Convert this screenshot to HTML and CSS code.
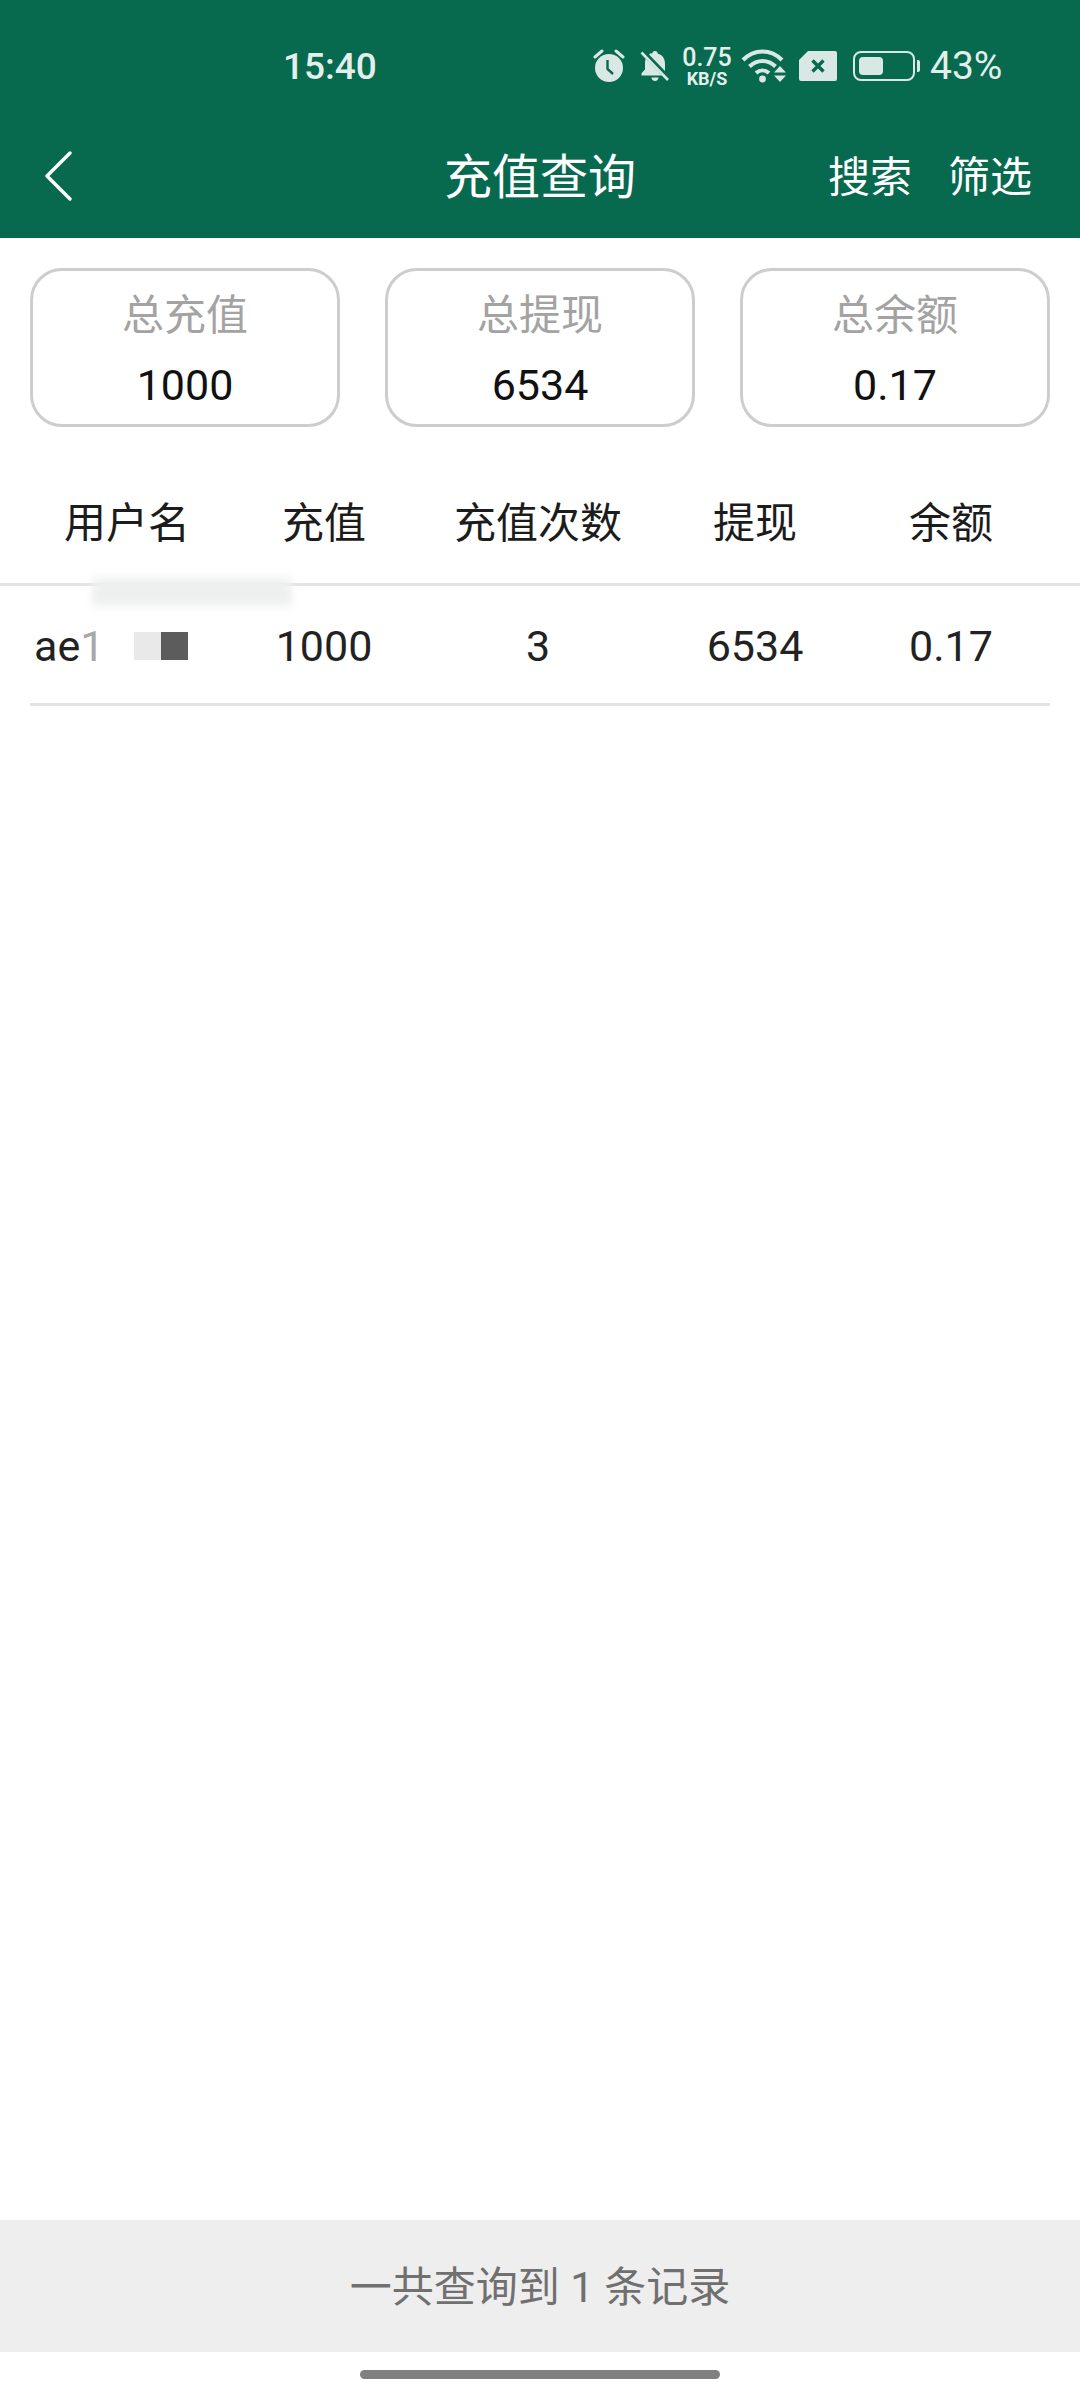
FILE: index.html
```html
<!DOCTYPE html>
<html lang="zh-CN">
<head>
    <meta charset="UTF-8">
    <meta name="viewport" content="width=device-width, initial-scale=1.0">
    <title>充值查询</title>
    <link rel="stylesheet" href="styles.css">
</head>
<body>
    <header class="topBar">
        <div class="statusBar">
            <span class="clock">15:40</span>
            <div class="statusIcons">
                <!-- alarm -->
                <svg class="icon alarmIcon" width="32" height="34" viewBox="0 0 32 34">
                    <circle cx="16" cy="19" r="14" fill="#d9e8e4"/>
                    <path d="M14.5 11v9l5.5 5" fill="none" stroke="#07694e" stroke-width="2.4"/>
                    <path d="M2 8l7-6M30 8l-7-6" fill="none" stroke="#d9e8e4" stroke-width="3" stroke-linecap="round"/>
                </svg>
                <!-- muted bell -->
                <svg class="icon bellIcon" width="30" height="34" viewBox="0 0 30 34">
                    <path d="M15 2c1.700 0 2.800 1.200 2.800 2.800 4.800 1.200 7.200 5 7.200 10v7.200L9 5.600C10.500 4.200 11 3.900 12.200 4.800 12.200 3.200 13.300 2 15 2zM5.600 9.500L22 26.500H1.500v-2.200L5 20.500v-6c0-1.800.2-3.500.6-5zM11.500 28.500h7c0 2-1.500 3.500-3.500 3.500s-3.500-1.500-3.500-3.500z" fill="#d9e8e4"/>
                    <path d="M1.500 3.500L28 31" fill="none" stroke="#d9e8e4" stroke-width="2.600"/>
                </svg>
                <div class="netSpeed">
                    <span class="netValue">0.75</span>
                    <span class="netUnit">KB/S</span>
                </div>
                <!-- wifi with up/down arrows -->
                <svg class="icon wifiIcon" width="46" height="34" viewBox="0 0 46 34">
                    <path d="M2 11C13 -0.500 30 -0.500 41 11M8.500 17.500C16 10 27 10 34.500 17.500M15 24C19 20.500 24 20.500 28 24" fill="none" stroke="#d9e8e4" stroke-width="4"/>
                    <circle cx="21.500" cy="30" r="3.400" fill="#d9e8e4"/>
                    <path d="M39 17l6 6.500H33zM39 33l6-6.500H33z" fill="#d9e8e4"/>
                </svg>
                <!-- sim card, no service -->
                <svg class="icon simIcon" width="38" height="30" viewBox="0 0 38 30">
                    <path d="M9 0h27a2 2 0 0 1 2 2v26a2 2 0 0 1-2 2H2a2 2 0 0 1-2-2V9z" fill="#d9e8e4"/>
                    <path d="M13.500 9.500l11 11M24.500 9.500l-11 11" fill="none" stroke="#07694e" stroke-width="3.400"/>
                </svg>
                <div class="battery">
                    <div class="batteryBody"><div class="batteryFill"></div></div>
                    <div class="batteryTip"></div>
                </div>
                <span class="batteryText">43%</span>
            </div>
        </div>
        <nav class="navBar">
            <svg class="backIcon" width="28" height="50" viewBox="0 0 28 50">
                <path d="M26 2L3 25l23 23" fill="none" stroke="#fff" stroke-width="3.400" stroke-linecap="round" stroke-linejoin="round"/>
            </svg>
            <h1 class="navTitle">充值查询</h1>
            <div class="navActions">
                <span>搜索</span>
                <span>筛选</span>
            </div>
        </nav>
    </header>

    <main class="content">
        <section class="summary">
            <div class="summaryCard">
                <div class="summaryLabel">总充值</div>
                <div class="summaryValue">1000</div>
            </div>
            <div class="summaryCard">
                <div class="summaryLabel">总提现</div>
                <div class="summaryValue">6534</div>
            </div>
            <div class="summaryCard">
                <div class="summaryLabel">总余额</div>
                <div class="summaryValue">0.17</div>
            </div>
        </section>

        <div class="tableRow tableHead">
            <div>用户名</div>
            <div>充值</div>
            <div>充值次数</div>
            <div>提现</div>
            <div>余额</div>
        </div>
        <div class="rowWrap">
            <div class="smudge"></div>
            <div class="tableRow tableData">
                <div class="userCell">
                    <span>ae</span><span class="fadedChar">1</span>
                    <i class="maskLight"></i><i class="maskDark"></i>
                </div>
                <div>1000</div>
                <div>3</div>
                <div>6534</div>
                <div>0.17</div>
            </div>
        </div>
    </main>

    <footer class="recordBar">一共查询到 1 条记录</footer>
    <div class="homeArea"><div class="homeBar"></div></div>
</body>
</html>
```

FILE: styles.css
```css
* {
    box-sizing: border-box;
}
html, body {
    height: 2400px;
}
body {
    margin: 0;
    display: flex;
    flex-direction: column;
    background-color: #fff;
    color: #222;
    font-family: Roboto, "Noto Sans CJK SC", sans-serif;
}
.topBar {
    height: 238px;
    background-color: #07694e;
    color: #fff;
}
.statusBar {
    height: 114px;
    padding: 18px 80px 0 283px;
    display: flex;
    align-items: center;
    justify-content: space-between;
    color: #e4efec;
}
.clock {
    font-size: 37px;
    font-weight: 500;
}
.statusIcons {
    display: flex;
    align-items: center;
}
.icon {
    display: block;
}
.alarmIcon {
    margin-right: 15px;
}
.bellIcon {
    margin-right: 13px;
}
.netSpeed {
    width: 48px;
    margin-right: 10px;
    display: flex;
    flex-direction: column;
    align-items: center;
    line-height: 1;
    font-weight: 500;
}
.netValue {
    font-size: 25px;
    height: 25px;
}
.netUnit {
    font-size: 18px;
    height: 18px;
    font-weight: 700;
}
.wifiIcon {
    margin-right: 12px;
}
.simIcon {
    margin-right: 16px;
}
.battery {
    display: flex;
    align-items: center;
    margin-right: 10px;
}
.batteryBody {
    width: 62px;
    height: 30px;
    padding: 4px;
    border: 2px solid #d9e8e4;
    border-radius: 8px;
}
.batteryFill {
    width: 24px;
    height: 100%;
    background-color: #d9e8e4;
    border-radius: 4px;
}
.batteryTip {
    width: 3px;
    height: 12px;
    margin-left: 2px;
    background-color: #d9e8e4;
    border-radius: 0 2px 2px 0;
}
.batteryText {
    font-size: 39px;
    width: 70px;
}
.navBar {
    height: 124px;
    padding: 0 48px 0 44px;
    display: flex;
    align-items: center;
    justify-content: space-between;
    position: relative;
}
.navTitle {
    position: absolute;
    left: 0;
    right: 0;
    margin: 0;
    padding-bottom: 6px;
    text-align: center;
    font-size: 48px;
    font-weight: 400;
}
.navActions {
    display: flex;
    gap: 36px;
    padding-bottom: 6px;
    font-size: 42px;
}
.content {
    flex: 1;
}
.summary {
    padding: 30px 30px 0;
    display: flex;
    justify-content: space-between;
}
.summaryCard {
    width: 310px;
    height: 159px;
    padding-top: 18px;
    border: 3px solid #cdcdcd;
    border-radius: 32px;
    text-align: center;
}
.summaryLabel {
    font-size: 42px;
    line-height: 54px;
    color: #a3a3a3;
}
.summaryValue {
    margin-top: 15px;
    font-size: 43px;
    line-height: 54px;
    color: #111;
}
.tableRow {
    display: grid;
    grid-template-columns: 194px 200px 228px 206px 186px;
    padding: 0 30px;
    align-items: center;
    text-align: center;
}
.tableHead {
    height: 159px;
    padding-top: 28px;
    font-size: 42px;
    border-bottom: 3px solid #e3e3e3;
    color: #1c1c1c;
}
.rowWrap {
    position: relative;
    height: 120px;
}
.tableData {
    height: 120px;
    font-size: 43px;
    position: relative;
}
.tableData::after {
    content: "";
    position: absolute;
    left: 30px;
    right: 30px;
    bottom: 0;
    height: 3px;
    background-color: #e3e3e3;
}
.userCell {
    display: flex;
    align-items: center;
    padding-left: 4px;
    text-align: left;
}
.fadedChar {
    color: #a8a8a8;
}
.maskLight, .maskDark {
    display: block;
    width: 27px;
    height: 28px;
}
.maskLight {
    margin-left: 30px;
    background-color: #e9e9e9;
}
.maskDark {
    background-color: #5c5c5c;
}
.smudge {
    position: absolute;
    left: 92px;
    top: -8px;
    width: 200px;
    height: 28px;
    background-color: #eef0ef;
    filter: blur(4px);
}
.recordBar {
    height: 132px;
    padding-bottom: 6px;
    display: flex;
    align-items: center;
    justify-content: center;
    background-color: #eee;
    color: #707070;
    font-size: 42px;
    white-space: pre;
}
.homeArea {
    height: 48px;
    padding-top: 18px;
}
.homeBar {
    width: 360px;
    height: 9px;
    margin: 0 auto;
    background-color: #808080;
    border-radius: 5px;
}
```
